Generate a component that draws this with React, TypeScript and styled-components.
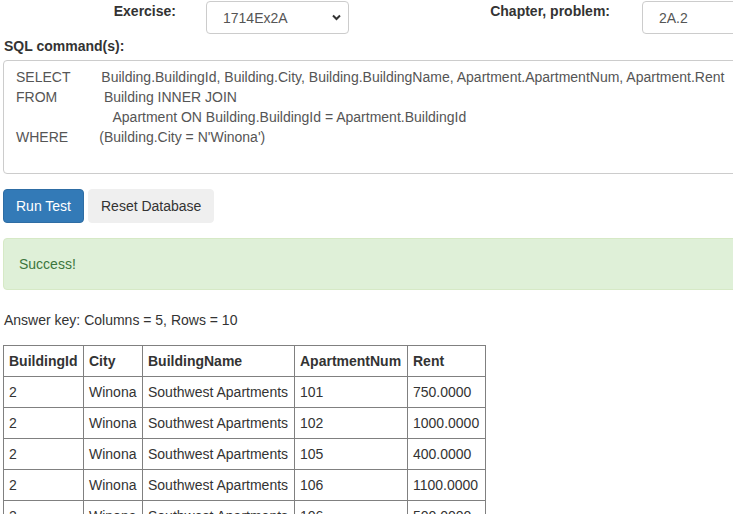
import React from "react";
import styled, { createGlobalStyle } from "styled-components";

const Global = createGlobalStyle`
  html, body { margin: 0; padding: 0; background: #fff; overflow: hidden; }
  body {
    font-family: "Liberation Sans", Arial, Helvetica, sans-serif;
    font-size: 14px;
    line-height: 20px;
    color: #333;
  }
`;

const Page = styled.div`
  height: 514px;
  overflow: hidden;
  padding: 0 0 0 3px;
  width: 800px;
`;

const TopRow = styled.div`
  display: flex;
  align-items: flex-start;
  height: 34px;
`;

const Label = styled.label<{ $w: number }>`
  width: ${(p) => p.$w}px;
  text-align: right;
  font-weight: bold;
  padding-top: 1px;
  flex: none;
`;

const SelectWrap = styled.div<{ $ml: number; $w: number }>`
  position: relative;
  margin-left: ${(p) => p.$ml}px;
  width: ${(p) => p.$w}px;
  flex: none;
`;

const Select = styled.select`
  appearance: none;
  -webkit-appearance: none;
  width: 100%;
  height: 33px;
  margin-top: 1px;
  border: 1px solid #ccc;
  border-radius: 4px;
  background: #fff;
  color: #555;
  font: inherit;
  padding: 0 16px;
  box-sizing: border-box;
  display: block;
`;

const Chevron = styled.svg`
  position: absolute;
  right: 8px;
  top: 14px;
  pointer-events: none;
`;

const TextInput = styled.input`
  margin-left: 32px;
  width: 140px;
  height: 33px;
  margin-top: 1px;
  border: 1px solid #ccc;
  border-radius: 4px;
  color: #555;
  font: inherit;
  padding: 0 16px;
  box-sizing: border-box;
  flex: none;
`;

const SectionLabel = styled.div`
  font-weight: bold;
  margin-top: 2px;
  height: 20px;
  padding-left: 1px;
`;

const SqlBox = styled.div`
  margin-top: 4px;
  width: 790px;
  height: 114px;
  box-sizing: border-box;
  border: 1px solid #ccc;
  border-radius: 4px;
  padding: 6px 12px;
  color: #555;
  white-space: pre;
  line-height: 20px;
`;

const ButtonRow = styled.div`
  display: flex;
  gap: 4px;
  margin-top: 15px;
`;

const Button = styled.button<{ $primary?: boolean }>`
  font: inherit;
  height: 34px;
  padding: 0 12px;
  border-radius: 4px;
  border: 1px solid ${(p) => (p.$primary ? "#2e6da4" : "#efefef")};
  background: ${(p) => (p.$primary ? "#337ab7" : "#efefef")};
  color: ${(p) => (p.$primary ? "#fff" : "#333")};
  cursor: pointer;
`;

const Alert = styled.div`
  margin-top: 15px;
  width: 790px;
  box-sizing: border-box;
  padding: 15px;
  background: #dff0d8;
  border: 1px solid #d6e9c6;
  border-radius: 4px;
  color: #3c763d;
`;

const Summary = styled.div`
  margin-top: 20px;
  padding-left: 1px;
`;

const Table = styled.table`
  margin-top: 15px;
  border-collapse: collapse;
  table-layout: fixed;
`;

const Th = styled.th<{ $w: number }>`
  width: ${(p) => p.$w}px;
  border: 1px solid #808080;
  padding: 5px 5px;
  text-align: left;
  font-weight: bold;
  line-height: 20px;
  box-sizing: border-box;
`;

const Td = styled.td`
  border: 1px solid #808080;
  padding: 5px 5px;
  line-height: 20px;
  white-space: nowrap;
`;

const columns: [string, number][] = [
  ["BuildingId", 80],
  ["City", 59],
  ["BuildingName", 152],
  ["ApartmentNum", 113],
  ["Rent", 78],
];

const rows = [
  ["2", "Winona", "Southwest Apartments", "101", "750.0000"],
  ["2", "Winona", "Southwest Apartments", "102", "1000.0000"],
  ["2", "Winona", "Southwest Apartments", "105", "400.0000"],
  ["2", "Winona", "Southwest Apartments", "106", "1100.0000"],
  ["2", "Winona", "Southwest Apartments", "106", "500.0000"],
  ["2", "Winona", "Southwest Apartments", "107", "650.0000"],
];

const sql =
  "SELECT        Building.BuildingId, Building.City, Building.BuildingName, Apartment.ApartmentNum, Apartment.Rent\n" +
  "FROM            Building INNER JOIN\n" +
  "                         Apartment ON Building.BuildingId = Apartment.BuildingId\n" +
  "WHERE        (Building.City = N'Winona')";

export default function App() {
  return (
    <>
      <Global />
      <Page>
        <TopRow>
          <Label $w={173}>Exercise:</Label>
          <SelectWrap $ml={30} $w={143}>
            <Select defaultValue="1714Ex2A">
              <option>1714Ex2A</option>
            </Select>
            <Chevron width="9" height="7" viewBox="0 0 9 7">
              <path d="M1 1.5 L4.5 5 L8 1.5" fill="none" stroke="#333" strokeWidth="2" />
            </Chevron>
          </SelectWrap>
          <Label $w={261}>Chapter, problem:</Label>
          <TextInput defaultValue="2A.2" />
        </TopRow>
        <SectionLabel>SQL command(s):</SectionLabel>
        <SqlBox>{sql}</SqlBox>
        <ButtonRow>
          <Button $primary>Run Test</Button>
          <Button>Reset Database</Button>
        </ButtonRow>
        <Alert>Success!</Alert>
        <Summary>Answer key: Columns = 5, Rows = 10</Summary>
        <Table>
          <thead>
            <tr>
              {columns.map(([c, w]) => (
                <Th key={c} $w={w}>
                  {c}
                </Th>
              ))}
            </tr>
          </thead>
          <tbody>
            {rows.map((r, i) => (
              <tr key={i}>
                {r.map((v, j) => (
                  <Td key={j}>{v}</Td>
                ))}
              </tr>
            ))}
          </tbody>
        </Table>
      </Page>
    </>
  );
}
